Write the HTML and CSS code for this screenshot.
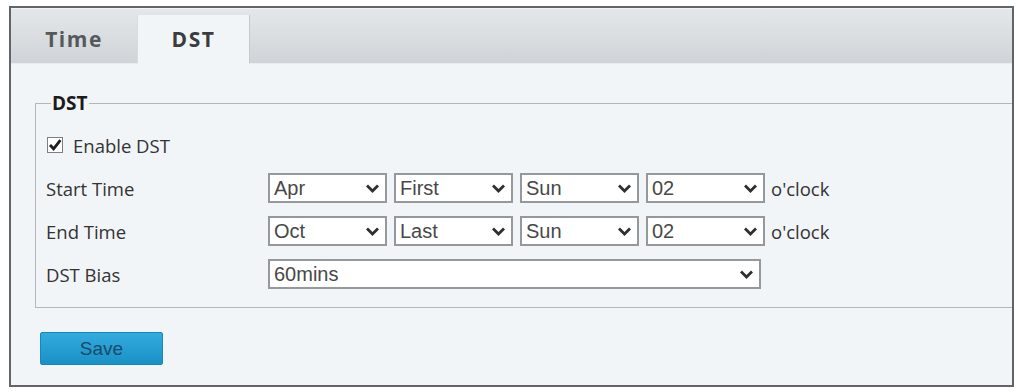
FILE: index.html
```html
<!DOCTYPE html>
<html lang="en">
<head>
    <meta charset="UTF-8">
    <title>DST Settings</title>
    <link rel="stylesheet" href="styles.css">
</head>
<body>
    <div class="frame">
        <div class="tabs">
            <div class="tab">Time</div>
            <div class="tab active">DST</div>
            <div class="tab-fill"></div>
        </div>

        <div class="panel">
            <fieldset class="group">
                <legend>DST</legend>

                <label class="row">
                    <span class="check">
                        <svg viewBox="0 0 14 14" width="14" height="14"><path d="M2 7 L5.6 10.8 L12.4 2.2" fill="none" stroke="#1e1e1e" stroke-width="2.8"/></svg>
                    </span>
                    Enable DST
                </label>

                <div class="row">
                    <span class="label">Start Time</span>
                    <div class="select"><span>Apr</span><svg class="chev" viewBox="0 0 14 9"><path d="M1.5 1.5 L7 7 L12.5 1.5"/></svg></div>
                    <div class="select"><span>First</span><svg class="chev" viewBox="0 0 14 9"><path d="M1.5 1.5 L7 7 L12.5 1.5"/></svg></div>
                    <div class="select"><span>Sun</span><svg class="chev" viewBox="0 0 14 9"><path d="M1.5 1.5 L7 7 L12.5 1.5"/></svg></div>
                    <div class="select"><span>02</span><svg class="chev" viewBox="0 0 14 9"><path d="M1.5 1.5 L7 7 L12.5 1.5"/></svg></div>
                    <span class="unit">o'clock</span>
                </div>

                <div class="row">
                    <span class="label">End Time</span>
                    <div class="select"><span>Oct</span><svg class="chev" viewBox="0 0 14 9"><path d="M1.5 1.5 L7 7 L12.5 1.5"/></svg></div>
                    <div class="select"><span>Last</span><svg class="chev" viewBox="0 0 14 9"><path d="M1.5 1.5 L7 7 L12.5 1.5"/></svg></div>
                    <div class="select"><span>Sun</span><svg class="chev" viewBox="0 0 14 9"><path d="M1.5 1.5 L7 7 L12.5 1.5"/></svg></div>
                    <div class="select"><span>02</span><svg class="chev" viewBox="0 0 14 9"><path d="M1.5 1.5 L7 7 L12.5 1.5"/></svg></div>
                    <span class="unit">o'clock</span>
                </div>

                <div class="row">
                    <span class="label">DST Bias</span>
                    <div class="select select-wide"><span>60mins</span><svg class="chev" viewBox="0 0 14 9"><path d="M1.5 1.5 L7 7 L12.5 1.5"/></svg></div>
                </div>
            </fieldset>

            <button class="save">Save</button>
        </div>
    </div>
</body>
</html>
```

FILE: styles.css
```css
body, html {
    margin: 0;
    padding: 0;
    background-color: white;
    font-family: "Open Sans", "Noto Sans", sans-serif;
    overflow: hidden;
}

.frame {
    box-sizing: border-box;
    margin: 6px 0 0 9px;
    width: 1005px;
    height: 381px;
    border: 2px solid #626467;
    background-color: #f2f5f8;
    display: flex;
    flex-direction: column;
}

/* Tabs */
.tabs {
    display: flex;
    height: 55px;
    background: linear-gradient(#e4e7ea, #cfd3d7);
    border-top: 1px solid #f3f4f5;
}

.tab {
    width: 126px;
    display: flex;
    align-items: center;
    justify-content: center;
    margin-top: 6px;
    font-size: 21px;
    font-weight: 700;
    letter-spacing: 1.5px;
    color: #56595c;
    border-bottom: 1px solid #e9ecef;
}

.tab.active {
    width: 111px;
    background-color: #f2f5f8;
    border-left: 1px solid #d9dcdf;
    border-right: 1px solid #c5c9cd;
    border-bottom: 1px solid #f2f5f8;
    color: #3a3c3e;
}

.tab-fill {
    flex: 1;
    border-bottom: 1px solid #e9ecef;
    margin-top: 6px;
}

/* Panel */
.panel {
    padding: 26px 0 0 24px;
}

.group {
    margin: 0;
    padding: 14px 0 18px 10px;
    border: 1px solid #b4b7ba;
    border-right: none;
    display: flex;
    flex-direction: column;
    gap: 13px;
}

.group legend {
    font-size: 19px;
    line-height: 26px;
    font-weight: 700;
    color: #1b1b1b;
    padding: 0 1px;
    margin-left: 5px;
}

.row {
    display: flex;
    align-items: center;
    height: 30px;
    font-size: 18.5px;
    color: #333;
}

.check {
    box-sizing: border-box;
    width: 16px;
    height: 16px;
    margin: 0 10px 0 1px;
    border: 1px solid #7d7f82;
    background-color: white;
    display: flex;
    align-items: center;
    justify-content: center;
}

.label {
    width: 222px;
}

.select {
    box-sizing: border-box;
    width: 119px;
    height: 30px;
    margin-right: 7px;
    padding: 0 5px 0 4px;
    border: 2px solid #96999c;
    background-color: white;
    display: flex;
    align-items: center;
    justify-content: space-between;
    font-family: "Liberation Sans", Arial, sans-serif;
    font-size: 20px;
    color: #484848;
}

.select-wide {
    width: 493px;
}

.chev {
    width: 15px;
    height: 9px;
    fill: none;
    stroke: #2f2f2f;
    stroke-width: 2.8;
}

.unit {
    margin-left: -1px;
    color: #333;
}

.save {
    margin: 24px 0 0 5px;
    width: 123px;
    height: 33px;
    border: 1px solid #1a86b6;
    border-radius: 2px;
    background: linear-gradient(#33abdd, #1a91c6);
    font-family: "Liberation Sans", Arial, sans-serif;
    font-size: 19px;
    color: #1b4a6b;
    cursor: pointer;
}
```
